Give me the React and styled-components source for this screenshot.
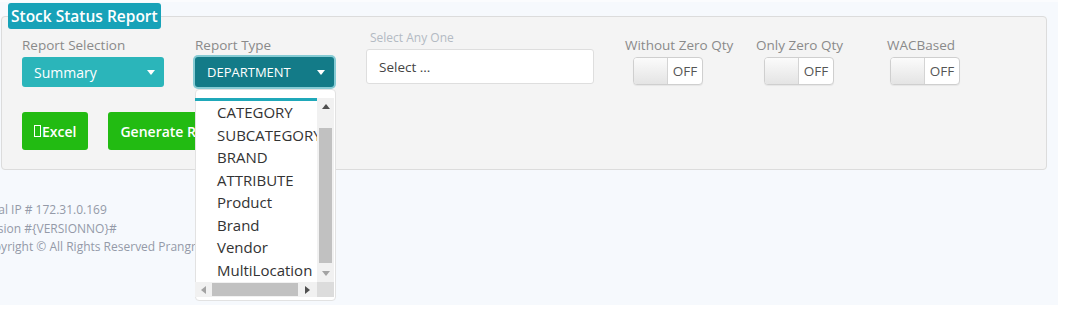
import React from "react";
import styled, { createGlobalStyle } from "styled-components";

const GlobalStyle = createGlobalStyle`
  html, body { margin: 0; padding: 0; background: #ffffff; }
  body { font-family: "Open Sans", "Noto Sans", sans-serif; }
  * { box-sizing: border-box; }
`;

const Page = styled.div`
  width: 1058px;
  height: 305px;
  background: #f6f9fd;
  border-top: 2px solid #fbfcfe;
  overflow: hidden;
  position: relative;
`;

const Panel = styled.fieldset`
  margin: 1px 11px 0 1px;
  padding: 0 6px;
  border: 1px solid #dcdcdc;
  border-radius: 4px;
  background: #f4f4f4;
  min-width: 0;
`;

const Title = styled.legend`
  padding: 0 3px;
  height: 26px;
  line-height: 26px;
  background: #17a2b8;
  color: #ffffff;
  font-size: 15.5px;
  font-weight: 600;
  border-radius: 3px;
  white-space: nowrap;
`;

const Body = styled.div`
  display: flex;
  flex-direction: column;
  padding: 8px 0 19px 14px;
`;

const FilterRow = styled.div`
  display: flex;
  align-items: flex-start;
`;

const Field = styled.div`
  position: relative;
  display: flex;
  flex-direction: column;
  gap: 4px;
  margin-left: ${(p) => p.$offset || 0}px;
  margin-top: ${(p) => (p.$lift ? -p.$lift : 0)}px;
  width: ${(p) => p.$width}px;
`;

const Label = styled.label`
  font-size: 13.5px;
  line-height: 16px;
  color: #8a8a8a;
  white-space: nowrap;
`;

const FaintLabel = styled.label`
  font-size: 12px;
  line-height: 14px;
  color: #b3bac3;
  white-space: nowrap;
  padding-left: 4px;
`;

const SelectBox = styled.div`
  height: 30px;
  display: flex;
  align-items: center;
  justify-content: space-between;
  padding: 0 9px 0 12px;
  border-radius: 3px;
  color: #ffffff;
  font-size: ${(p) => (p.$focused ? 13 : 14)}px;
  background: ${(p) => (p.$focused ? "#137b88" : "#2bb5ba")};
  box-shadow: ${(p) => (p.$focused ? "0 0 0 2px #86cbd4" : "none")};
  white-space: nowrap;
`;

const InputSelect = styled.div`
  height: 35px;
  display: flex;
  align-items: center;
  padding: 0 12px;
  background: #ffffff;
  border: 1px solid #dedede;
  border-radius: 3px;
  font-size: 13.5px;
  color: #444444;
`;

const ToggleField = styled.div`
  display: flex;
  flex-direction: column;
  gap: 4px;
  width: 131px;
  margin-left: ${(p) => p.$offset || 0}px;
`;

const Switch = styled.div`
  width: 70px;
  height: 28px;
  margin-left: ${(p) => p.$indent}px;
  display: flex;
  border: 1px solid #cfcfcf;
  border-radius: 4px;
  overflow: hidden;
  background: #ffffff;
  box-shadow: 0 1px 1px rgba(0, 0, 0, 0.06);
`;

const Knob = styled.div`
  width: 34px;
  background: linear-gradient(#fbfbfb, #e4e4e4);
  border-right: 1px solid #d4d4d4;
`;

const SwitchText = styled.div`
  flex: 1;
  display: flex;
  align-items: center;
  justify-content: center;
  font-size: 13.5px;
  color: #555555;
`;

const ButtonRow = styled.div`
  display: flex;
  gap: 20px;
  margin-top: 25px;
`;

const GreenButton = styled.button`
  height: 38px;
  padding: 0 12px;
  border: none;
  border-radius: 3px;
  background: #22bb12;
  color: #ffffff;
  font-family: inherit;
  font-size: 14px;
  font-weight: 600;
  white-space: nowrap;
  display: flex;
  align-items: center;
`;

const Tofu = styled.span`
  display: inline-block;
  width: 7px;
  height: 12px;
  border: 1px solid #ffffff;
  margin-right: 1px;
`;

const Footer = styled.div`
  margin: 31px 0 0 -21px;
  font-size: 12px;
  line-height: 18.5px;
  color: #949aa8;
  white-space: nowrap;
`;

const Dropdown = styled.div`
  position: absolute;
  top: calc(100% + 2px);
  left: 0;
  width: 141px;
  height: 212px;
  background: #ffffff;
  border: 1px solid #e2e2e2;
  border-radius: 4px;
  padding: 8px 0 4px 0;
  z-index: 5;
`;

const ListBox = styled.div`
  display: grid;
  grid-template-columns: 122px 17px;
  grid-template-rows: 184px 15px;
  margin-left: -1px;
`;

const OptionViewport = styled.div`
  overflow: hidden;
`;

const OptionScroller = styled.div`
  margin-top: -19.6px;
`;

const Option = styled.div`
  height: 22.57px;
  line-height: 22.57px;
  padding-left: 22px;
  font-size: 15px;
  white-space: nowrap;
  color: ${(p) => (p.$selected ? "#ffffff" : "#333333")};
  background: ${(p) => (p.$selected ? "#1fa8b9" : "transparent")};
`;

const VTrack = styled.div`
  background: #f1f1f1;
  display: flex;
  flex-direction: column;
  align-items: center;
`;

const HTrack = styled.div`
  background: #f1f1f1;
  display: flex;
  align-items: center;
`;

const ArrowCell = styled.div`
  width: ${(p) => p.$w}px;
  height: ${(p) => p.$h}px;
  display: flex;
  align-items: center;
  justify-content: center;
  flex-shrink: 0;
  margin-${(p) => p.$push}: auto;
`;

const VThumb = styled.div`
  width: 13px;
  height: 135px;
  margin-top: 13px;
  background: #c1c1c1;
`;

const HThumb = styled.div`
  width: 86px;
  height: 13px;
  margin-left: 1px;
  background: #c1c1c1;
`;

const Corner = styled.div`
  background: #dcdcdc;
`;

const Caret = ({ dir = "down", color = "#fff", size = 8 }) => {
  const paths = {
    down: "M0 0 L8 0 L4 5 Z",
    up: "M0 5 L8 5 L4 0 Z",
    left: "M5 0 L5 8 L0 4 Z",
    right: "M0 0 L0 8 L5 4 Z",
  };
  const vertical = dir === "up" || dir === "down";
  return (
    <svg
      width={vertical ? size : (size * 5) / 8}
      height={vertical ? (size * 5) / 8 : size}
      viewBox={vertical ? "0 0 8 5" : "0 0 5 8"}
    >
      <path d={paths[dir]} fill={color} />
    </svg>
  );
};

const options = [
  "DEPARTMENT",
  "CATEGORY",
  "SUBCATEGORY",
  "BRAND",
  "ATTRIBUTE",
  "Product",
  "Brand",
  "Vendor",
  "MultiLocation",
];

const toggles = [
  { label: "Without Zero Qty", indent: 8, offset: 31 },
  { label: "Only Zero Qty", indent: 8, offset: 0 },
  { label: "WACBased", indent: 3, offset: 0 },
];

export default function App() {
  return (
    <>
      <GlobalStyle />
      <Page>
        <Panel>
          <Title>Stock Status Report</Title>
          <Body>
            <FilterRow>
              <Field $width={142}>
                <Label>Report Selection</Label>
                <SelectBox>
                  <span>Summary</span>
                  <Caret />
                </SelectBox>
              </Field>
              <Field $width={139} $offset={31}>
                <Label>Report Type</Label>
                <SelectBox $focused>
                  <span>DEPARTMENT</span>
                  <Caret />
                </SelectBox>
                <Dropdown>
                  <ListBox>
                    <OptionViewport>
                      <OptionScroller>
                        {options.map((o, i) => (
                          <Option key={o} $selected={i === 0}>
                            {o}
                          </Option>
                        ))}
                      </OptionScroller>
                    </OptionViewport>
                    <VTrack>
                      <ArrowCell $w={17} $h={17}>
                        <Caret dir="up" color="#505050" size={8} />
                      </ArrowCell>
                      <VThumb />
                      <ArrowCell $w={17} $h={17} $push="top">
                        <Caret dir="down" color="#a3a3a3" size={8} />
                      </ArrowCell>
                    </VTrack>
                    <HTrack>
                      <ArrowCell $w={16} $h={15}>
                        <Caret dir="left" color="#a3a3a3" size={8} />
                      </ArrowCell>
                      <HThumb />
                      <ArrowCell $w={19} $h={15} $push="left">
                        <Caret dir="right" color="#505050" size={8} />
                      </ArrowCell>
                    </HTrack>
                    <Corner />
                  </ListBox>
                </Dropdown>
              </Field>
              <Field $width={228} $offset={32} $lift={6}>
                <FaintLabel>Select Any One</FaintLabel>
                <InputSelect>Select ...</InputSelect>
              </Field>
              {toggles.map((t) => (
                <ToggleField key={t.label} $offset={t.offset}>
                  <Label>{t.label}</Label>
                  <Switch $indent={t.indent}>
                    <Knob />
                    <SwitchText>OFF</SwitchText>
                  </Switch>
                </ToggleField>
              ))}
            </FilterRow>
            <ButtonRow>
              <GreenButton>
                <Tofu />
                Excel
              </GreenButton>
              <GreenButton>Generate Report</GreenButton>
            </ButtonRow>
          </Body>
        </Panel>
        <Footer>
          <div>Local IP # 172.31.0.169</div>
          <div>Version #{"{VERSIONNO}"}#</div>
          <div>Copyright © All Rights Reserved Prangroup</div>
        </Footer>
      </Page>
    </>
  );
}
